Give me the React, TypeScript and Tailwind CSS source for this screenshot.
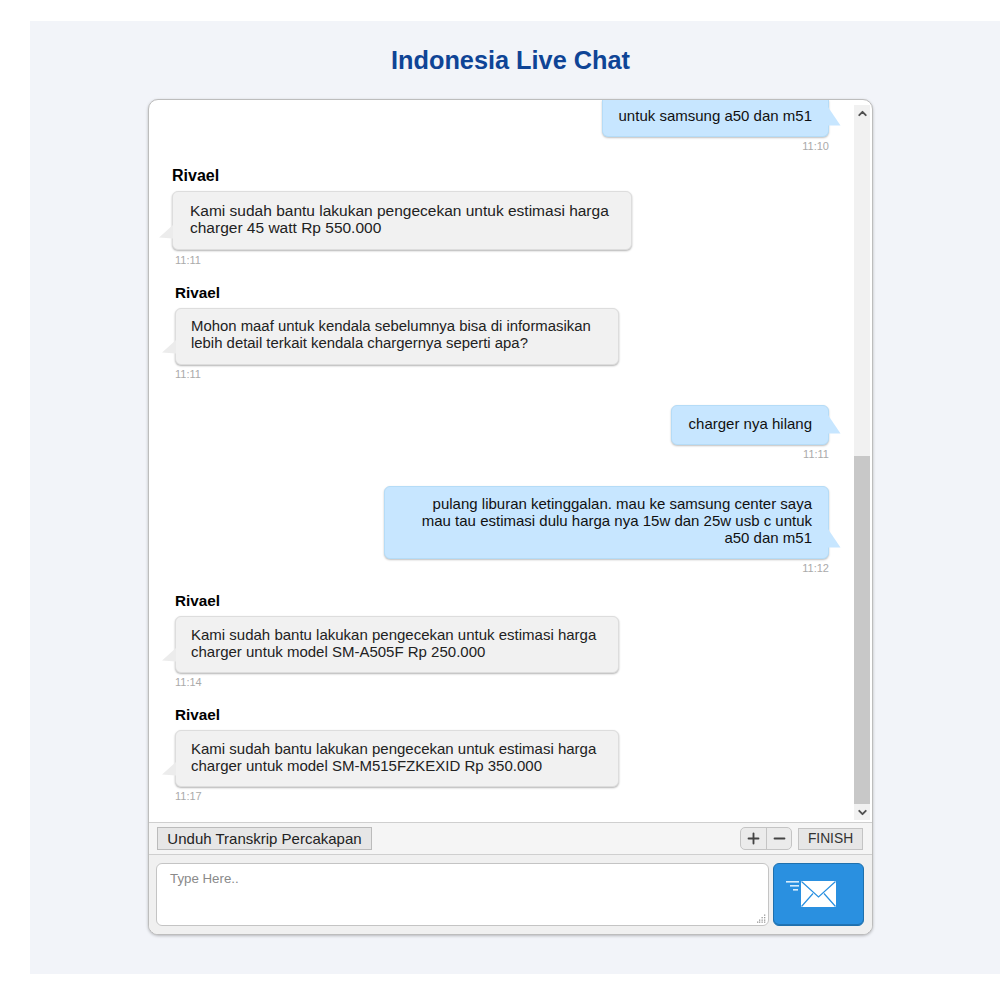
import { ChevronDown, ChevronUp, Minus, Plus } from "lucide-react";

const Agent = ({ offset, nameMt, width, bubbleX, nameSize, textSize, timeMt, lines, time }: { offset: string; nameMt: string; width: string; bubbleX: string; nameSize: string; textSize: string; timeMt: string; lines: string[]; time: string }) => (
  <div className={nameMt}>
    <div className={`${nameSize} leading-[18px] font-bold text-black ${offset}`}>Rivael</div>
    <div className={`relative mt-[6px] ${width} ${offset} ${bubbleX} ${textSize} rounded-md border border-[#dddddd] bg-[#f1f1f1] shadow-[0_1px_2px_rgba(0,0,0,0.3)] leading-[17px] text-[#222222]`}>
      {lines.map((l) => <div key={l}>{l}</div>)}
      <svg className="absolute left-[-14px] bottom-[10px]" width="14" height="14" viewBox="0 0 14 14">
        <path d="M14 0 L0 12.5 L14 13.5 Z" fill="#ececec" />
      </svg>
    </div>
    <div className={`${timeMt} ml-[26px] text-[11px] leading-[14px] text-[#aaaaaa]`}>{time}</div>
  </div>
);

const Own = ({ mt, width, pad, rounded, lines, time }: { mt: string; width: string; pad: string; rounded: string; lines: string[]; time: string }) => (
  <div className={`${mt} flex flex-col items-end pr-[25px]`}>
    <div className={`relative ${width} ${pad} ${rounded} border border-[#b5dcf7] bg-[#c7e6ff] shadow-[0_1px_2px_rgba(0,0,0,0.25)] text-right text-[15px] leading-[17px] text-[#111111]`}>
      {lines.map((l) => <div key={l}>{l}</div>)}
      <svg className="absolute right-[-13px] bottom-[10px]" width="13" height="19" viewBox="0 0 13 19">
        <path d="M0 0 L12.5 18.5 L0 18.5 Z" fill="#c7e6ff" />
      </svg>
    </div>
    <div className="mt-[2px] text-[11px] leading-[14px] text-[#aaaaaa]">{time}</div>
  </div>
);

const App = () => {
  return (
    <div className="h-[1000px] bg-white pt-[21px] pl-[30px] font-['Liberation_Sans',Arial,sans-serif]">
      <div className="h-[953px] bg-[#f2f4f9] pt-[25px]">
        <h1 className="mr-[9px] text-center text-[25.3px] leading-[29px] font-bold text-[#0f4496]">Indonesia Live Chat</h1>
        <div className="mt-[24px] ml-[118px] w-[725px] h-[836px] flex flex-col overflow-hidden rounded-[10px] border border-[#bdbdbd] bg-white shadow-[0_1px_3px_rgba(0,0,0,0.25)]">
          <div className="flex h-[722px] shrink-0">
            <div className="flex-1 min-w-0">
              <Own mt="mt-0" width="w-[227px]" pad="pt-[7px] pb-[12px] pr-[16px]" rounded="rounded-b-md border-t-0" lines={["untuk samsung a50 dan m51"]} time="11:10" />
              <Agent nameMt="mt-[14px]" offset="ml-[23px]" width="w-[460px]" bubbleX="pl-[17px] pt-[10px] pb-[13px]" nameSize="text-[16px]" textSize="text-[15.5px]" timeMt="mt-[3px]" lines={["Kami sudah bantu lakukan pengecekan untuk estimasi harga", "charger 45 watt Rp 550.000"]} time="11:11" />
              <Agent nameMt="mt-[17px]" offset="ml-[26px]" width="w-[444px]" bubbleX="pl-[15px] pt-[9px] pb-[12px]" nameSize="text-[15.3px]" textSize="text-[14.9px]" timeMt="mt-[2px]" lines={["Mohon maaf untuk kendala sebelumnya bisa di informasikan", "lebih detail terkait kendala chargernya seperti apa?"]} time="11:11" />
              <Own mt="mt-[24px]" width="w-[158px]" pad="pt-[9px] pb-[12px] pr-[16px]" rounded="rounded-md" lines={["charger nya hilang"]} time="11:11" />
              <Own mt="mt-[25px]" width="w-[445px]" pad="pt-[8px] pb-[12px] pr-[16px]" rounded="rounded-md" lines={["pulang liburan ketinggalan. mau ke samsung center saya", "mau tau estimasi dulu harga nya 15w dan 25w usb c untuk", "a50 dan m51"]} time="11:12" />
              <Agent nameMt="mt-[17px]" offset="ml-[26px]" width="w-[444px]" bubbleX="pl-[15px] pt-[9px] pb-[12px]" nameSize="text-[15.3px]" textSize="text-[15px]" timeMt="mt-[2px]" lines={["Kami sudah bantu lakukan pengecekan untuk estimasi harga", "charger untuk model SM-A505F Rp 250.000"]} time="11:14" />
              <Agent nameMt="mt-[17px]" offset="ml-[26px]" width="w-[444px]" bubbleX="pl-[15px] pt-[9px] pb-[12px]" nameSize="text-[15.3px]" textSize="text-[15px]" timeMt="mt-[2px]" lines={["Kami sudah bantu lakukan pengecekan untuk estimasi harga", "charger untuk model SM-M515FZKEXID Rp 350.000"]} time="11:17" />
            </div>
            <div className="mt-[5px] mb-[2px] mr-[2px] w-[16px] shrink-0 flex flex-col bg-[#f1f1f1]">
              <div className="h-[17px] flex items-center justify-center text-[#505050]">
                <ChevronUp size={13} strokeWidth={3.5} />
              </div>
              <div className="mt-[334px] h-[348px] bg-[#c8c8c8]" />
              <div className="h-[16px] flex items-center justify-center text-[#505050]">
                <ChevronDown size={13} strokeWidth={3.5} />
              </div>
            </div>
          </div>
          <div className="h-[33px] shrink-0 flex items-center border-y border-[#cfcfcf] bg-[#f5f5f5] pl-[8px] pr-[9px]">
            <button className="w-[215px] h-[23px] border border-[#bbbbbb] bg-[#e6e6e6] text-[15px] leading-[20px] text-[#222222]">Unduh Transkrip Percakapan</button>
            <div className="ml-auto flex h-[23px] w-[52px] rounded-[5px] border border-[#c4c4c4] bg-[#ebebeb] text-[#444444]">
              <div className="w-[26px] flex items-center justify-center border-r border-[#c4c4c4]"><Plus size={17} strokeWidth={2.6} /></div>
              <div className="flex-1 flex items-center justify-center"><Minus size={17} strokeWidth={2.6} /></div>
            </div>
            <button className="ml-[6px] w-[65px] h-[22px] border border-[#c4c4c4] bg-[#e6e6e6] text-[13.8px] leading-[20px] text-[#333333]">FINISH</button>
          </div>
          <div className="flex-1 flex bg-[#f0f0f0] pt-[8px] pl-[7px] pr-[8px] gap-[4px]">
            <div className="relative w-[613px] h-[63px] rounded-md border border-[#c4c4c4] bg-white px-[13px] py-[7px] text-[13.3px] leading-[16px] text-[#8a8a8a]">
              Type Here..
              <svg className="absolute right-[2px] bottom-[2px]" width="9" height="9" viewBox="0 0 9 9" fill="#9a9a9a">
                <rect x="7" y="0.5" width="1.3" height="1.3" /><rect x="4.5" y="3" width="1.3" height="1.3" /><rect x="7" y="3" width="1.3" height="1.3" />
                <rect x="2" y="5.5" width="1.3" height="1.3" /><rect x="4.5" y="5.5" width="1.3" height="1.3" /><rect x="7" y="5.5" width="1.3" height="1.3" />
                <rect x="0" y="7.5" width="1.3" height="1.3" /><rect x="2" y="7.5" width="1.3" height="1.3" /><rect x="4.5" y="7.5" width="1.3" height="1.3" /><rect x="7" y="7.5" width="1.3" height="1.3" />
              </svg>
            </div>
            <button className="w-[91px] h-[63px] rounded-md border border-[#1f70ad] bg-[#2a90e0] flex items-start justify-start pl-[12px] pt-[16px] shadow-[inset_0_-1px_0_rgba(0,0,0,0.2)]">
              <svg width="52" height="28" viewBox="0 0 52 28">
                <g fill="#d8edfc">
                  <rect x="0" y="1" width="13" height="1.6" />
                  <rect x="4" y="5" width="9" height="1.6" />
                  <rect x="7" y="9" width="5" height="1.6" />
                </g>
                <path d="M15 1 H50 V27 H15 Z" fill="#ffffff" />
                <path d="M15.5 1.5 L32.5 17 L49.5 1.5 M15.5 26.5 L27 13.5 M49.5 26.5 L38 13.5" fill="none" stroke="#2a90e0" strokeWidth="1.2" />
              </svg>
            </button>
          </div>
        </div>
      </div>
    </div>
  );
};

export default App;
